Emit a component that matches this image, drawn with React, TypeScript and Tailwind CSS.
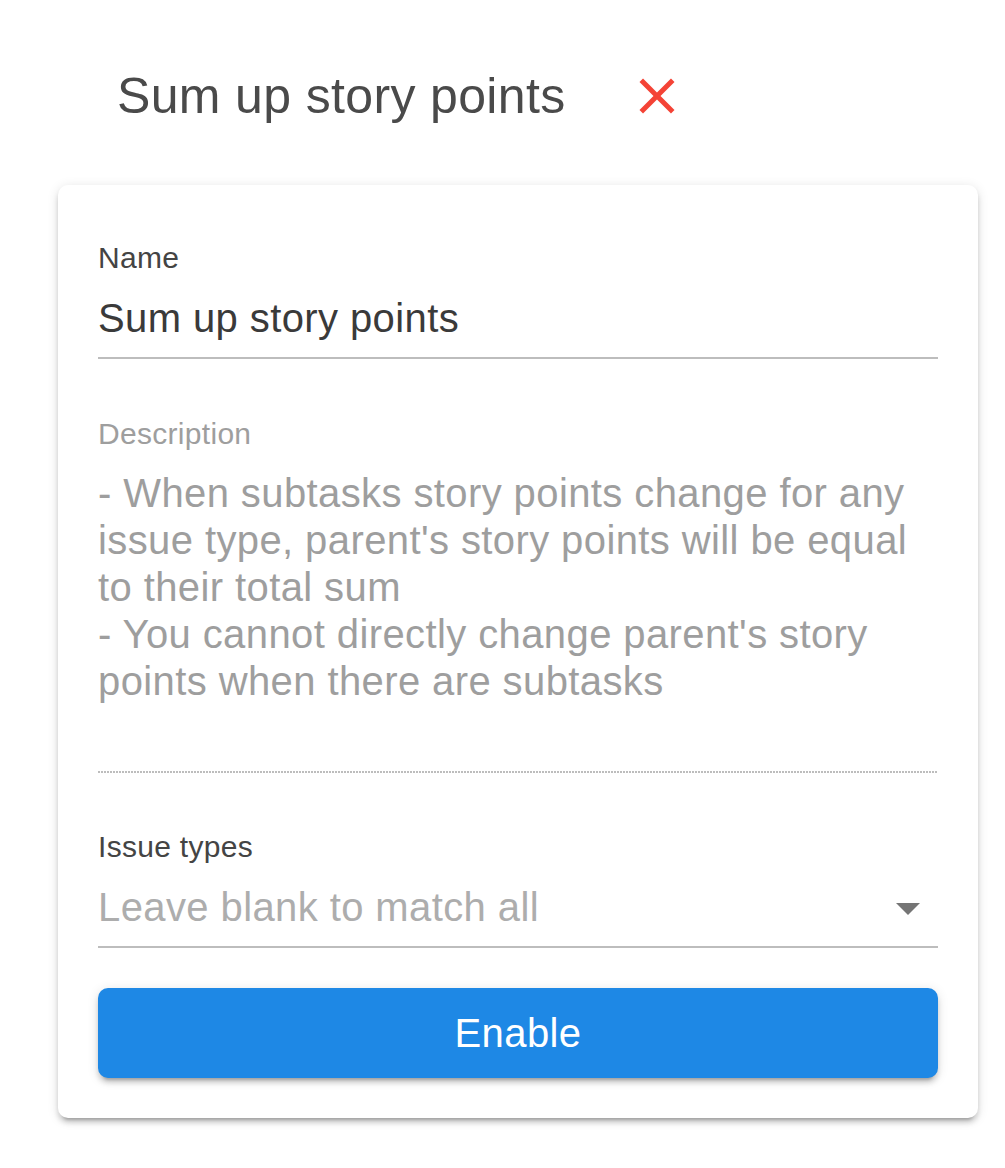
import React from 'react';

const DESCRIPTION = [
  '- When subtasks story points change for any',
  "issue type, parent's story points will be equal",
  'to their total sum',
  "- You cannot directly change parent's story",
  'points when there are subtasks',
];

export default function App() {
  return (
    <div className="min-h-screen bg-white pl-[58px] pt-[66px] font-['Liberation_Sans',Arial,sans-serif]">
      {/* Header */}
      <div className="flex items-center h-[60px] pl-[59px]">
        <h1 className="text-[50px] leading-[60px] tracking-[0.35px] text-[#4a4a4a] font-normal whitespace-nowrap">
          Sum up story points
        </h1>
        <button className="ml-[61px] h-[60px] w-[60px]" aria-label="Close">
          <svg viewBox="0 0 24 24" className="h-[60px] w-[60px]" fill="#f44336">
            <path d="M19 6.41L17.59 5 12 10.59 6.41 5 5 6.41 10.59 12 5 17.59 6.41 19 12 13.41 17.59 19 19 17.59 13.41 12z" />
          </svg>
        </button>
      </div>

      {/* Card */}
      <div className="mt-[59px] w-[920px] rounded-[10px] bg-white px-[40px] pt-[55px] pb-[40px] shadow-[0_7px_3px_-5px_rgba(0,0,0,0.2),0_5px_5px_0_rgba(0,0,0,0.14),0_2px_12px_0_rgba(0,0,0,0.12)]">
        {/* Name */}
        <div className="text-[30px] leading-[36px] tracking-[0.3px] text-[#444444]">Name</div>
        <div className="mt-[18px] text-[40px] leading-[48px] tracking-[0.4px] text-[#3a3a3a]">Sum up story points</div>
        <div className="mt-[15px] h-[2px] bg-[#bdbdbd]" />

        {/* Description */}
        <div className="mt-[57px] text-[30px] leading-[36px] tracking-[0.3px] text-[#9e9e9e]">Description</div>
        <div className="mt-[18px] text-[40px] leading-[47px] tracking-[0.4px] text-[#9e9e9e]">
          {DESCRIPTION.map((line) => (
            <div key={line} className="whitespace-nowrap">{line}</div>
          ))}
        </div>
        <div className="mt-[66px] h-[2px] bg-[repeating-linear-gradient(to_right,#bdbdbd_0,#bdbdbd_2px,transparent_2px,transparent_3px)]" />

        {/* Issue types */}
        <div className="mt-[56px] text-[30px] leading-[36px] tracking-[0.3px] text-[#444444]">Issue types</div>
        <div className="mt-[18px] flex items-center justify-between">
          <span className="text-[40px] leading-[48px] tracking-[0.4px] text-[#adadad]">Leave blank to match all</span>
          <svg viewBox="0 0 24 12" className="mr-[18px] mt-[4px] h-[12px] w-[24px]" fill="#757575">
            <path d="M0 0h24L12 12z" />
          </svg>
        </div>
        <div className="mt-[15px] h-[2px] bg-[#bdbdbd]" />

        {/* Action */}
        <button className="mt-[40px] flex h-[90px] w-full items-center justify-center rounded-[10px] bg-[#1e88e5] text-[40px] tracking-[0.4px] text-white shadow-[0_7px_3px_-5px_rgba(0,0,0,0.2),0_5px_5px_0_rgba(0,0,0,0.14),0_2px_12px_0_rgba(0,0,0,0.12)]">
          Enable
        </button>
      </div>
    </div>
  );
}
